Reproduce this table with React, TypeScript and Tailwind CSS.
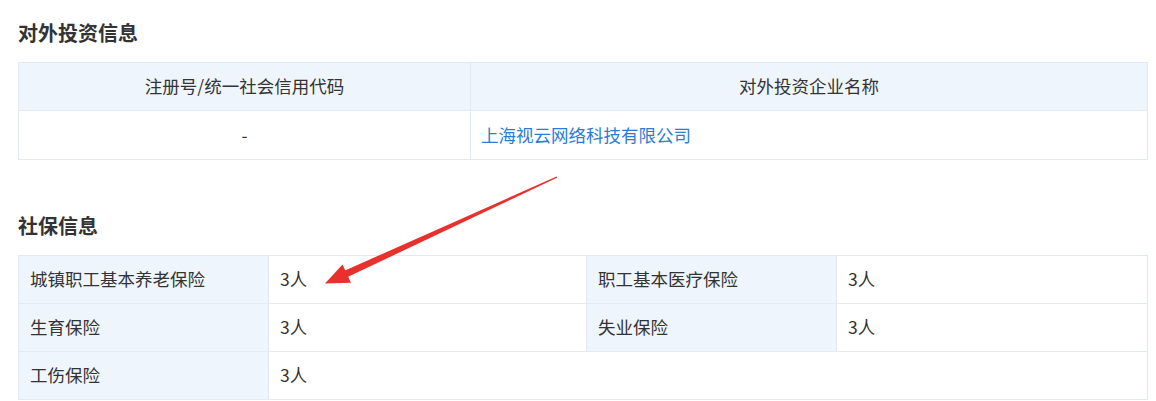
import React from 'react';

const font = { fontFamily: '"Microsoft YaHei", "Noto Sans CJK SC", "Liberation Sans", sans-serif' };

const cellBorder = 'border border-[#e3e9f0]';

function SectionTitle({ children, className }: { children: React.ReactNode; className?: string }) {
  return <h2 className={`text-[20px] leading-[26px] font-bold text-[#333] ${className ?? ''}`}>{children}</h2>;
}

const socialRows: [string, string, string?, string?][] = [
  ['城镇职工基本养老保险', '3人', '职工基本医疗保险', '3人'],
  ['生育保险', '3人', '失业保险', '3人'],
  ['工伤保险', '3人'],
];

// red annotation arrow drawn over the page
function Arrow() {
  return (
    <svg className="absolute left-0 top-0 pointer-events-none" width="1156" height="401" viewBox="0 0 1156 401">
      <polygon points="556.6,176.4 557.4,177.6 347.6,277 344.4,270.8" fill="#e8302c" />
      <polygon points="325,283.5 351,282.8 342.5,264.5" fill="#e8302c" />
    </svg>
  );
}

export default function App() {
  return (
    <div className="relative w-[1156px] h-[401px] bg-white overflow-hidden" style={font}>
      <div className="pl-[18px] pr-[8px] pt-[20px]">
        <SectionTitle>对外投资信息</SectionTitle>

        <table className="mt-[16px] w-full border-collapse text-[17.5px] text-[#333]">
          <colgroup>
            <col className="w-[452px]" />
            <col />
          </colgroup>
          <tbody>
            <tr className="h-[48px] bg-[#eff5fc]">
              <td className={`${cellBorder} text-center font-normal`}>注册号/统一社会信用代码</td>
              <td className={`${cellBorder} text-center font-normal`}>对外投资企业名称</td>
            </tr>
            <tr className="h-[49px]">
              <td className={`${cellBorder} text-center`}>-</td>
              <td className={`${cellBorder} pl-[10px]`}>
                <span className="text-[#2a7dd3]">上海视云网络科技有限公司</span>
              </td>
            </tr>
          </tbody>
        </table>

        <SectionTitle className="mt-[53px]">社保信息</SectionTitle>

        <table className="mt-[16px] w-full border-collapse text-[17.5px] text-[#333]">
          <colgroup>
            <col className="w-[250px]" />
            <col className="w-[318px]" />
            <col className="w-[250px]" />
            <col />
          </colgroup>
          <tbody>
            {socialRows.map(([l1, v1, l2, v2]) => (
              <tr key={l1} className="h-[48px]">
                <td className={`${cellBorder} bg-[#eff5fc] pl-[11px]`}>{l1}</td>
                {l2 ? (
                  <>
                    <td className={`${cellBorder} pl-[11px]`}>{v1}</td>
                    <td className={`${cellBorder} bg-[#eff5fc] pl-[11px]`}>{l2}</td>
                    <td className={`${cellBorder} pl-[11px]`}>{v2}</td>
                  </>
                ) : (
                  <td colSpan={3} className={`${cellBorder} pl-[11px]`}>{v1}</td>
                )}
              </tr>
            ))}
          </tbody>
        </table>
      </div>
      <Arrow />
    </div>
  );
}
